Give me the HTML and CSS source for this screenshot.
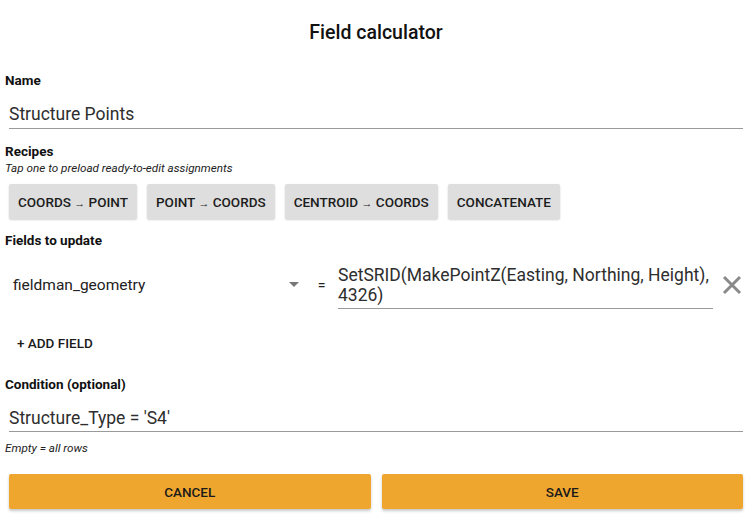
FILE: index.html
```html
<!DOCTYPE html>
<html>
<head>
<meta charset="utf-8">
<link rel="stylesheet" href="styles.css">
</head>
<body>
<div class="dialog">
  <h1 class="title">Field calculator</h1>

  <div class="label label-name">Name</div>
  <div class="input input-name">Structure Points</div>

  <div class="label label-recipes">Recipes</div>
  <div class="hint hint-recipes">Tap one to preload ready-to-edit assignments</div>
  <div class="recipes">
    <button class="chip">COORDS <span class="arrow">→</span> POINT</button>
    <button class="chip">POINT <span class="arrow">→</span> COORDS</button>
    <button class="chip">CENTROID <span class="arrow">→</span> COORDS</button>
    <button class="chip">CONCATENATE</button>
  </div>

  <div class="label label-fields">Fields to update</div>
  <div class="assign-row">
    <div class="select">
      <span class="select-text">fieldman_geometry</span>
      <span class="caret"></span>
    </div>
    <span class="eq">=</span>
    <div class="expr">SetSRID(MakePointZ(Easting, Northing, Height),<br>4326)</div>
    <span class="remove">
      <svg width="20" height="20" viewBox="0 0 20 20"><path d="M2 2 L18 18 M18 2 L2 18" stroke="#8a8a8a" stroke-width="3" fill="none"/></svg>
    </span>
  </div>

  <button class="add-field">+ ADD FIELD</button>

  <div class="label label-cond">Condition (optional)</div>
  <div class="input input-cond">Structure_Type = 'S4'</div>
  <div class="hint hint-cond">Empty = all rows</div>

  <div class="actions">
    <button class="action">CANCEL</button>
    <button class="action">SAVE</button>
  </div>
</div>
</body>
</html>
```

FILE: styles.css
```css
* { box-sizing: border-box; }
html, body {
  margin: 0;
  padding: 0;
  background: #ffffff;
}
body {
  font-family: Roboto, "Liberation Sans", sans-serif;
  color: #1a1a1a;
}
.dialog {
  width: 753px;
  height: 520px;
  padding: 0 10px 0 9px;
  overflow: hidden;
}
.title {
  margin: 0;
  height: 66px;
  line-height: 66px;
  font-size: 19.5px;
  font-weight: 500;
  text-align: center;
  color: #111;
}
.label {
  margin-left: -4px;
  font-size: 13.5px;
  font-weight: 700;
  line-height: 16px;
  height: 16px;
  color: #111;
}
.label-name { margin-top: 6px; }
.label-recipes { margin-top: 14px; }
.label-fields { margin-top: 13px; }
.label-cond { margin-top: 25px; }

.input {
  font-size: 17.5px;
  line-height: 22px;
  color: #2e2e2e;
  padding-bottom: 2px;
  border-bottom: 1px solid #9a9a9a;
}
.input-name { margin-top: 15px; padding-bottom: 3px; }
.input-cond { margin-top: 15px; }

.hint {
  margin-left: -4px;
  font-size: 11.7px;
  font-style: italic;
  line-height: 14px;
  height: 14px;
  color: #222;
}
.hint-recipes { margin-top: 2px; }
.hint-cond { margin-top: 9px; }

.recipes {
  display: flex;
  gap: 10px;
  margin-top: 9px;
}
.chip {
  height: 35px;
  padding: 0 9px;
  border: none;
  border-radius: 2px;
  background: #dedede;
  box-shadow: 0 1px 2px rgba(0,0,0,0.18);
  font-family: Roboto, "Liberation Sans", sans-serif;
  font-size: 13.5px;
  font-weight: 500;
  color: #1c1c1c;
}
.arrow {
  font-size: 11px;
}

.assign-row {
  display: flex;
  align-items: center;
  margin-top: 16px;
  height: 45px;
}
.select {
  width: 296px;
  display: flex;
  align-items: center;
  padding-left: 4px;
  padding-right: 6px;
  margin-top: -4px;
}
.select-text {
  flex: 1;
  font-size: 15.5px;
  color: #222;
}
.caret {
  width: 0;
  height: 0;
  border-left: 5px solid transparent;
  border-right: 5px solid transparent;
  border-top: 5px solid #777;
}
.eq {
  width: 33px;
  text-align: center;
  font-size: 14px;
  color: #222;
  margin-top: -4px;
}
.expr {
  width: 375px;
  font-size: 17.5px;
  line-height: 20px;
  color: #2e2e2e;
  padding-bottom: 3px;
  border-bottom: 1px solid #9a9a9a;
}
.remove {
  margin-left: 9px;
  width: 20px;
  height: 20px;
  margin-top: -4px;
}
.remove svg { display: block; }

.add-field {
  display: block;
  margin-top: 26px;
  margin-left: 8px;
  padding: 0;
  border: none;
  background: none;
  height: 16px;
  line-height: 16px;
  font-family: Roboto, "Liberation Sans", sans-serif;
  font-size: 13.5px;
  font-weight: 500;
  color: #1a1a1a;
}

.actions {
  display: flex;
  gap: 11px;
  margin-top: 19px;
}
.action {
  flex: 1;
  height: 35px;
  border: none;
  border-radius: 2px;
  background: #efa62f;
  box-shadow: 0 2px 3px rgba(0,0,0,0.22);
  font-family: Roboto, "Liberation Sans", sans-serif;
  font-size: 13.5px;
  font-weight: 500;
  color: #1a1a1a;
}
```
